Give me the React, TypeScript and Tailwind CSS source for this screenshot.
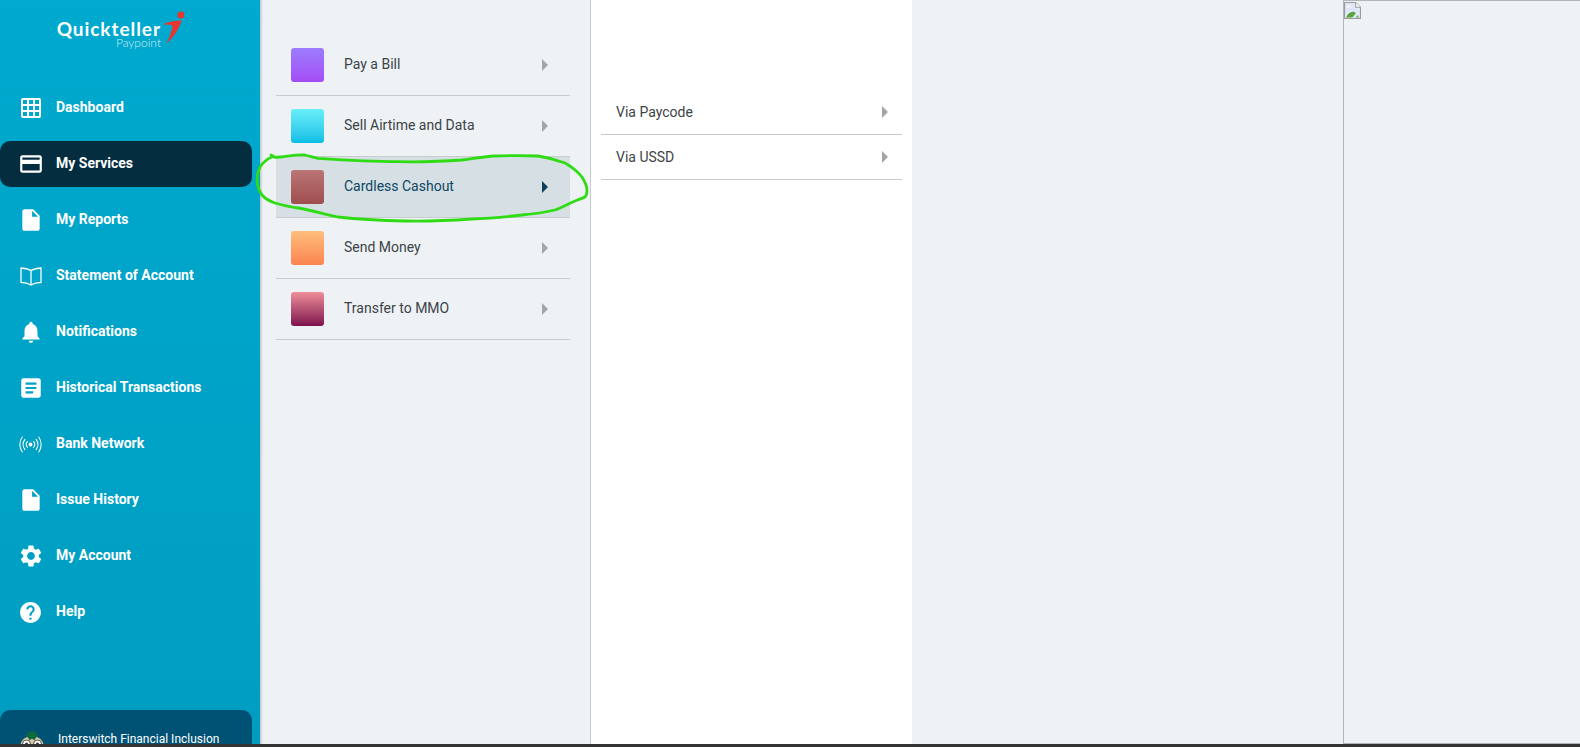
import {
  MdGridOn,
  MdOutlineCreditCard,
  MdInsertDriveFile,
  MdNotifications,
  MdArticle,
  MdSettings,
  MdHelp,
} from 'react-icons/md';

function NetworkIcon({ size }: { size: number }) {
  return (
    <svg width={size} height={size} viewBox="0 0 24 24" fill="none" stroke="currentColor" strokeWidth="1.1" strokeLinecap="round">
      <circle cx="12" cy="12" r="2" fill="currentColor" stroke="none" />
      <path d="M8.8 9a4.6 4.6 0 0 0 0 6" />
      <path d="M15.2 9a4.6 4.6 0 0 1 0 6" />
      <path d="M6.2 6.6a9 9 0 0 0 0 10.8" />
      <path d="M17.8 6.6a9 9 0 0 1 0 10.8" />
      <path d="M3.4 4.2a13.4 13.4 0 0 0 0 15.6" />
      <path d="M20.6 4.2a13.4 13.4 0 0 1 0 15.6" />
    </svg>
  );
}

function BookIcon() {
  return (
    <svg width="22" height="19" viewBox="0 0 22 19" fill="none" stroke="currentColor" strokeWidth="1.3" strokeLinejoin="round">
      <path d="M11 3.4C8 2 4.5 1.2 1 1V15.4C4.5 15.6 8 16.4 11 18C14 16.4 17.5 15.6 21 15.4V1C17.5 1.2 14 2 11 3.4Z" />
      <path d="M11 3.4V18" />
    </svg>
  );
}

const NAV = [
  { label: 'Dashboard', icon: <MdGridOn size={24} /> },
  { label: 'My Services', icon: <MdOutlineCreditCard size={26} />, active: true },
  { label: 'My Reports', icon: <MdInsertDriveFile size={26} /> },
  { label: 'Statement of Account', icon: <BookIcon /> },
  { label: 'Notifications', icon: <MdNotifications size={26} /> },
  { label: 'Historical Transactions', icon: <MdArticle size={26} /> },
  { label: 'Bank Network', icon: <NetworkIcon size={23} /> },
  { label: 'Issue History', icon: <MdInsertDriveFile size={26} /> },
  { label: 'My Account', icon: <MdSettings size={26} /> },
  { label: 'Help', icon: <MdHelp size={25} /> },
];

const SERVICES = [
  { label: 'Pay a Bill', swatch: 'from-[#9c7cff] to-[#a34bf4]' },
  { label: 'Sell Airtime and Data', swatch: 'from-[#66eff9] to-[#02bee5]' },
  { label: 'Cardless Cashout', swatch: 'from-[#ba7574] to-[#9f4e4f]', active: true },
  { label: 'Send Money', swatch: 'from-[#fdbe7d] to-[#fb834f]' },
  { label: 'Transfer to MMO', swatch: 'from-[#ee8f9a] to-[#7e0f4e]' },
];

function Arrow({ dark }: { dark?: boolean }) {
  return (
    <svg width="6" height="12" viewBox="0 0 6 12" className={dark ? 'text-[#0b3f5a]' : 'text-[#a3a6a8]'}>
      <polygon points="0,0 6,6 0,12" fill="currentColor" />
    </svg>
  );
}

function Logo() {
  return (
    <div className="flex h-[85px] items-start pl-[58px] pt-[11px]">
      <div className="flex w-[103px] flex-col items-end pt-[10px] text-white">
        <span className="font-['Lato',sans-serif] text-[19px] leading-[16px] font-bold tracking-[0.95px] whitespace-nowrap">
          Quickteller
        </span>
        <span className="font-['Lato',sans-serif] text-[12px] leading-[12px] font-light text-[#cfeef6]">Paypoint</span>
      </div>
      <svg width="24" height="36" viewBox="0 0 24 36" className="-ml-[1px]">
        <circle cx="21" cy="4" r="3.6" fill="#e8352e" />
        <path d="M3 13.5C9 10.5 15 9.5 21.5 9.5C19.5 17 14 26 6.5 32.5C9.5 26 12 20 12.5 14.5C9.5 13.5 6 13.3 3 13.5Z" fill="#e8352e" />
      </svg>
    </div>
  );
}

function Sidebar() {
  return (
    <aside className="flex w-[260px] shrink-0 flex-col overflow-hidden bg-gradient-to-b from-[#00a9ce] to-[#009dc1] pr-2">
      <Logo />
      <nav className="flex flex-col gap-[10px]">
        {NAV.map((item) => (
          <div
            key={item.label}
            className={`flex h-[46px] items-center rounded-[10px] text-white ${item.active ? 'bg-[#042d40]' : ''}`}
          >
            <span className="flex w-[61px] shrink-0 justify-center">{item.icon}</span>
            <span className="-ml-[5px] pb-[2px] text-[14px] font-bold">{item.label}</span>
          </div>
        ))}
      </nav>
      <div className="mt-auto flex h-[34px] gap-[14px] overflow-hidden rounded-t-[10px] bg-[#005275] pl-[20px] pt-[20px]">
        <svg width="24" height="24" viewBox="0 0 24 24" className="shrink-0">
          <ellipse cx="12" cy="15" rx="11.5" ry="9" fill="#d8c9a8" />
          <path d="M12 0l1.6 2.4 3-1-.6 3 3 1.2-2.8 2-1.8 2.6-2.4-1.4-2.4 1.4-1.8-2.6-2.8-2 3-1.2-.6-3 3 1z" fill="#0d6b3a" />
          <circle cx="6.5" cy="14" r="4" fill="#fff" stroke="#5a4a3a" />
          <circle cx="17.5" cy="14" r="4" fill="#fff" stroke="#5a4a3a" />
          <circle cx="6.5" cy="14" r="1.6" fill="#333" />
          <circle cx="17.5" cy="14" r="1.6" fill="#333" />
        </svg>
        <span className="mt-[1px] text-[12px] leading-[16px] whitespace-nowrap text-white">Interswitch Financial Inclusion</span>
      </div>
    </aside>
  );
}

function ServicesPanel() {
  return (
    <section className="w-[328px] shrink-0 border-r border-[#c6cacc] pt-[35px] pr-[20px] pl-[13px]">
      {SERVICES.map((s) => (
        <div
          key={s.label}
          className={`flex h-[61px] items-center border-b border-[#c8cccf] pr-[22px] pl-[15px] ${s.active ? 'bg-[#d5dfe4]' : ''}`}
        >
          <span className={`h-[34px] w-[33px] shrink-0 rounded-[3px] bg-gradient-to-b ${s.swatch}`} />
          <span className={`ml-[20px] flex-1 pb-[2px] text-[14px] ${s.active ? 'text-[#0c4763]' : 'text-[#3c4347]'}`}>
            {s.label}
          </span>
          <Arrow dark={s.active} />
        </div>
      ))}
    </section>
  );
}

function OptionsPanel() {
  return (
    <section className="w-[321px] shrink-0 bg-white px-[10px] pt-[90px]">
      {['Via Paycode', 'Via USSD'].map((label) => (
        <div key={label} className="flex h-[45px] items-center border-b border-[#c8cccf] pr-[14px] pl-[15px]">
          <span className="flex-1 text-[14px] text-[#3c4347]">{label}</span>
          <Arrow />
        </div>
      ))}
    </section>
  );
}

function BrokenImage() {
  return (
    <svg width="17" height="17" viewBox="0 0 16 16" className="mt-[1px]">
      <path d="M0.5 0.5H11L15.5 5V15.5H0.5Z" fill="#dfe8f6" stroke="#9a9a9a" />
      <path d="M11 0.5V5H15.5" fill="#fff" stroke="#9a9a9a" />
      <path d="M2 5c1-2 4-2 5 0H2Z" fill="#fff" />
      <path d="M2 14.5c1.5-4 5-6 8-5l1 1-3 4Z" fill="#57a63a" />
      <path d="M11 14.5l2-2 1 2Z" fill="#57a63a" />
    </svg>
  );
}

export default function App() {
  return (
    <div className="relative flex h-[747px] w-full flex-col overflow-hidden bg-[#333333] font-[Roboto,sans-serif]">
      <div className="flex h-[744px] bg-[#eef2f5]">
        <Sidebar />
        <div className="w-[3px] shrink-0 bg-gradient-to-r from-[#c3c6c8] to-[#eef2f5]" />
        <ServicesPanel />
        <OptionsPanel />
        <div className="flex-1" />
        <div className="w-[237px] shrink-0 border border-r-0 border-[#b4b7b9]">
          <BrokenImage />
        </div>
      </div>
      {/* hand drawn marker round the selected row */}
      <svg className="pointer-events-none absolute top-0 left-0" width="600" height="240" fill="none">
        <path
          d="M271 155L275 157.3C285 157 296 154 305 155C310 156 313 157.5 318 158.3C345 160 372 161.5 398 161.7C420 162 442 161.5 462 160C473 158.5 484 156.5 495 156C510 155.5 525 155.5 538 156C548 157.5 557 160 565 163C572 167 578 172 582 177C585 182 587 186 587 190C587 193 586.5 195.5 585 197C582 199 578 199.5 575 201C568 204 562 207.5 555 210C544 212.5 533 214 522 215C505 217 489 218.5 472 219C450 220.5 427 221.5 405 221C382 220.5 360 219.5 338 217C324 214 311 210 298 208C290 207 282 205 275 203C269 201 265 198.5 262 195C259 190.5 257 185 257 180C257 175 258 171 260 167C263 162.5 267 159 272 157"
          stroke="#2fdc13"
          strokeWidth="2.8"
          strokeLinecap="round"
          strokeLinejoin="round"
        />
      </svg>
    </div>
  );
}
